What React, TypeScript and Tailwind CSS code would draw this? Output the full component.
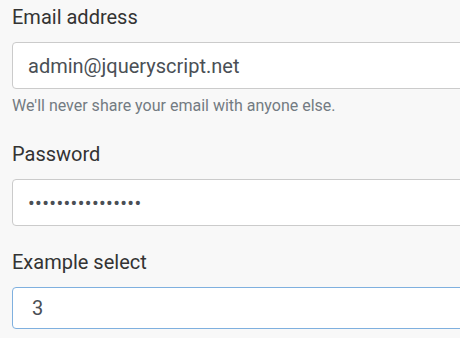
import React from 'react';

const font = { fontFamily: 'Roboto, "Liberation Sans", sans-serif' };

const Field = ({ label, children, help }: { label: string; children: React.ReactNode; help?: string }) => (
  <div className="flex flex-col">
    <label className="h-[30px] text-[20px] leading-[30px] text-[#333] mb-[10px]">{label}</label>
    {children}
    {help && <small className="mt-[5px] text-[16px] leading-[24px] text-[#737b82]">{help}</small>}
  </div>
);

export default function App() {
  return (
    <div className="w-[460px] h-[338px] overflow-hidden bg-[#f8f8f8]" style={font}>
      <div className="w-[700px] pl-3 pt-[2px] flex flex-col">
        <Field label="Email address" help="We'll never share your email with anyone else.">
          <div className="h-[47px] flex items-center px-[15px] bg-white border border-[#cbcbcb] rounded-[4px] text-[20px] text-[#4a4f55]">
            admin@jqueryscript.net
          </div>
        </Field>
        <div className="h-[21px]" />
        <Field label="Password">
          <div className="h-[47px] flex items-center px-[15px] bg-white border border-[#cbcbcb] rounded-[4px] text-[20px] text-[#4a4f55]">
            <span className="tracking-[0.35px]">••••••••••••••••</span>
          </div>
        </Field>
        <div className="h-[21px]" />
        <Field label="Example select">
          <div className="h-[42px] flex items-center pl-[19px] bg-white border border-[#7fb0df] rounded-[4px] text-[20px] text-[#4a4f55]">
            3
          </div>
        </Field>
      </div>
    </div>
  );
}
